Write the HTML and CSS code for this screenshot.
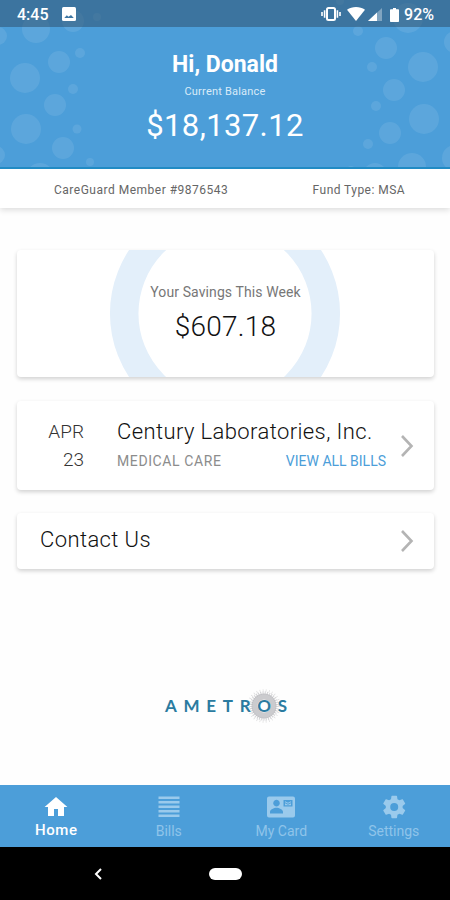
FILE: index.html
```html
<!DOCTYPE html>
<html lang="en">
<head>
    <meta charset="UTF-8">
    <meta name="viewport" content="width=device-width, initial-scale=1.0">
    <title>CareGuard</title>
    <link rel="stylesheet" href="styles.css">
</head>
<body>
    <header class="hero">
        <!-- Bubble pattern -->
        <svg class="bubbles" viewBox="0 0 450 169">
            <circle cx="36" cy="29" r="14"/>
            <circle cx="-2" cy="36" r="9"/>
            <circle cx="73" cy="21" r="11"/>
            <circle cx="97" cy="17" r="4"/>
            <circle cx="80" cy="53" r="5"/>
            <circle cx="59" cy="62" r="11"/>
            <circle cx="25" cy="78" r="15"/>
            <circle cx="73" cy="89" r="5"/>
            <circle cx="55" cy="105" r="11"/>
            <circle cx="26" cy="129" r="15"/>
            <circle cx="77" cy="129" r="4.5"/>
            <circle cx="63" cy="148" r="11"/>
            <circle cx="-4" cy="155" r="9"/>
            <circle cx="90" cy="162" r="4"/>
            <circle cx="40" cy="177" r="14"/>
            <circle cx="82" cy="174" r="7"/>
            <circle cx="340" cy="1" r="4"/>
            <circle cx="358" cy="31" r="5"/>
            <circle cx="408" cy="18" r="15"/>
            <circle cx="386" cy="48" r="11"/>
            <circle cx="455" cy="42" r="11"/>
            <circle cx="372" cy="67" r="5"/>
            <circle cx="423" cy="67" r="15"/>
            <circle cx="394" cy="90" r="11"/>
            <circle cx="376" cy="106" r="5"/>
            <circle cx="424" cy="119" r="15"/>
            <circle cx="390" cy="133" r="11"/>
            <circle cx="368" cy="144" r="5"/>
            <circle cx="412" cy="167" r="14"/>
            <circle cx="455" cy="158" r="13"/>
            <circle cx="375" cy="175" r="12"/>
            <circle cx="351" cy="171" r="5"/>
        </svg>

        <div class="status-bar">
            <span class="time">4:45</span>
            <svg class="picture-icon" width="14" height="14" viewBox="0 0 14 14">
                <rect width="14" height="14" rx="1.5" fill="#fff"/>
                <path d="M2.3 11 4.8 8.300 6.5 9.8 9 8 11.8 11z" fill="#3d76a3"/>
            </svg>
            <div class="status-right">
                <svg class="vibrate-icon" width="20" height="14" viewBox="0 0 20 14">
                    <rect x="6" y="1" width="8" height="12" rx="1.5" fill="none" stroke="#fff" stroke-width="2"/>
                    <path d="M3.6 3.2v7.6M16.4 3.2v7.6M1 5v4M19 5v4" stroke="#fff" stroke-width="1.6"/>
                </svg>
                <svg class="wifi-icon" width="18" height="14" viewBox="0 0 18 14">
                    <path d="M0 2.8C5 -.9 13 -.9 18 2.8L9 14z" fill="#fff"/>
                </svg>
                <svg class="signal-icon" width="14" height="13" viewBox="0 0 14 13">
                    <path d="M14 0v13H0z" fill="#fff" opacity=".35"/>
                    <path d="M9 4.6V13H0z" fill="#fff"/>
                </svg>
                <svg class="battery-icon" width="9" height="14" viewBox="0 0 9 14">
                    <path d="M3 0h3v1.2h2.2q.8 0 .8.8v11.2q0 .8-.8.8H.8q-.8 0-.8-.8V2q0-.8.8-.8H3z" fill="#fff"/>
                </svg>
                <span class="percent">92%</span>
            </div>
        </div>

        <h1>Hi, Donald</h1>
        <p class="balance-label">Current Balance</p>
        <p class="balance">$18,137.12</p>
    </header>

    <div class="member-bar">
        <span class="member">CareGuard Member #9876543</span>
        <span class="fund">Fund Type: MSA</span>
    </div>

    <main>
        <section class="card savings">
            <svg class="ring" width="232" height="127" viewBox="0 0 232 127">
                <circle cx="116" cy="63.5" r="100.8" fill="none" stroke="#e3effa" stroke-width="28.5"/>
            </svg>
            <p class="savings-label">Your Savings This Week</p>
            <p class="savings-amount">$607.18</p>
        </section>

        <section class="card bill">
            <div class="date">
                <span>APR</span>
                <span>23</span>
            </div>
            <div class="bill-info">
                <h2>Century Laboratories, Inc.</h2>
                <div class="bill-row">
                    <span class="category">MEDICAL CARE</span>
                    <a class="view-all">VIEW ALL BILLS</a>
                </div>
            </div>
            <svg class="chevron" width="14" height="24" viewBox="0 0 14 24">
                <path d="M2 2 11.5 12 2 22"/>
            </svg>
        </section>

        <section class="card contact">
            <h2>Contact Us</h2>
            <svg class="chevron" width="14" height="24" viewBox="0 0 14 24">
                <path d="M2 2 11.5 12 2 22"/>
            </svg>
        </section>

        <div class="logo">
            <span>AMETR</span><span class="logo-o">O<svg class="burst" width="36" height="36" viewBox="0 0 36 36">
                <circle cx="18" cy="18" r="9.5" fill="none" stroke="#a9a9ad" stroke-width="6" opacity=".6"/>
                <circle cx="18" cy="18" r="13" fill="none" stroke="#a9a9ad" stroke-width="3" stroke-dasharray="1 1.2" opacity=".5"/>
                <circle cx="18" cy="18" r="15.5" fill="none" stroke="#a9a9ad" stroke-width="2.5" stroke-dasharray=".7 2.4" opacity=".4"/>
            </svg></span><span>S</span>
        </div>
    </main>

    <nav class="tabs">
        <a class="tab active">
            <svg width="24" height="24" viewBox="0 0 24 24"><path d="M10 21v-7h4v7h6v-9h3.4L12 2 .6 12H4v9z"/></svg>
            <span>Home</span>
        </a>
        <a class="tab">
            <svg width="24" height="24" viewBox="0 0 24 24"><path d="M1.5 1.5h21v2.6h-21zM1.5 6h21v2.6h-21zM1.5 10.5h21v2.6h-21zM1.5 15h21v2.6h-21zM1.5 19.5h21v2.6h-21z"/></svg>
            <span>Bills</span>
        </a>
        <a class="tab">
            <svg width="28" height="24" viewBox="0 0 28 24">
                <path fill-rule="evenodd" d="M2 1.5h24q2 0 2 2v17q0 2-2 2H2q-2 0-2-2v-17q0-2 2-2zM9.500 4.800a3.300 3.300 0 1 0 .01 0zM3 18.500h13v-1.500c0-2.600-4-4.200-6.500-4.200S3 14.400 3 17zM16.500 5v6.500h9V5z"/>
                <path d="M18 6.200v1l3 1.600 3-1.600v-1l-3 1.600zM18 8.300v2h6v-2l-3 1.500z"/>
            </svg>
            <span>My Card</span>
        </a>
        <a class="tab">
            <svg width="24" height="24" viewBox="0 0 24 24"><path d="M20.600 13.100c.05-.4.080-.7.080-1.100s-.03-.7-.08-1.100l2.400-1.850c.2-.17.26-.47.12-.72l-2.250-3.900c-.14-.25-.44-.33-.68-.25l-2.800 1.130c-.6-.44-1.230-.82-1.930-1.100L15.040 1.200c-.03-.27-.27-.47-.55-.47H9.980c-.28 0-.52.2-.55.47L9 4.200c-.7.280-1.330.67-1.930 1.100L4.280 4.180c-.25-.1-.54 0-.68.25L1.350 8.330c-.14.25-.08.55.12.72L3.850 10.900c-.05.4-.08.73-.08 1.100s.03.7.08 1.100L1.470 14.950c-.2.170-.27.470-.12.720l2.250 3.900c.14.250.44.330.68.250l2.800-1.130c.6.440 1.230.82 1.930 1.100l.42 2.980c.03.270.27.470.55.470h4.500c.28 0 .52-.2.550-.47l.42-2.980c.7-.28 1.330-.66 1.930-1.100l2.800 1.130c.25.1.54 0 .68-.25l2.250-3.900c.14-.25.08-.55-.12-.72zM12.200 16a4 4 0 1 1 0-8 4 4 0 0 1 0 8z"/></svg>
            <span>Settings</span>
        </a>
    </nav>

    <footer class="system-nav">
        <svg class="back" width="8" height="12" viewBox="0 0 8 12"><path d="M7 1 2 6l5 5"/></svg>
        <span class="pill"></span>
    </footer>
</body>
</html>
```
FILE: styles.css
```css
* {
    box-sizing: border-box;
}
body {
    margin: 0;
    width: 450px;
    height: 900px;
    display: flex;
    flex-direction: column;
    background-color: #fefefe;
    font-family: Roboto, 'Liberation Sans', sans-serif;
    color: #303030;
    overflow: hidden;
}
h1, h2, p {
    margin: 0;
    font-weight: 400;
    white-space: nowrap;
}
span, a {
    white-space: nowrap;
}
svg {
    display: block;
    flex-shrink: 0;
}

/* Header */
.hero {
    position: relative;
    height: 169px;
    background-color: #4c9ed9;
    border-bottom: 2px solid #218bc4;
    color: #fff;
    text-align: center;
    overflow: hidden;
}
.bubbles {
    position: absolute;
    top: 0;
    left: 0;
    width: 450px;
    height: 169px;
    fill: rgba(255, 255, 255, 0.09);
}
.status-bar {
    position: relative;
    height: 27px;
    padding: 1px 16px 0 17px;
    display: flex;
    align-items: center;
    background-color: rgba(48, 82, 112, 0.55);
    font-size: 16px;
    font-weight: 500;
}
.picture-icon {
    margin-left: 13px;
}
.status-right {
    margin-left: auto;
    display: flex;
    align-items: center;
}
.wifi-icon {
    margin-left: 6px;
}
.signal-icon {
    margin: 1px 0 0 3px;
}
.battery-icon {
    margin: 1px 5px 0 8px;
}
.hero h1 {
    position: relative;
    margin-top: 24px;
    font-size: 23px;
    font-weight: 700;
    line-height: 28px;
}
.balance-label {
    position: relative;
    margin-top: 6px;
    font-size: 11px;
    line-height: 14px;
    letter-spacing: 0.2px;
    color: #d9ebf8;
}
.balance {
    position: relative;
    margin-top: 9px;
    font-size: 31px;
    line-height: 36px;
    letter-spacing: 0.4px;
}
.member-bar {
    height: 39px;
    padding: 2px 45px 0 54px;
    display: flex;
    align-items: center;
    justify-content: space-between;
    background-color: #fff;
    box-shadow: 0 2px 6px rgba(0, 0, 0, 0.14);
    font-size: 12px;
    color: #666;
}
.member {
    letter-spacing: 0.5px;
}
.fund {
    letter-spacing: 0.45px;
}

/* Cards */
main {
    height: 577px;
    padding: 42px 16px 0 17px;
    display: flex;
    flex-direction: column;
}
.card {
    background-color: #fff;
    border-radius: 4px;
    box-shadow: 0 2px 4px rgba(0, 0, 0, 0.18);
}
.savings {
    position: relative;
    height: 127px;
    padding-top: 32px;
    text-align: center;
    overflow: hidden;
}
.ring {
    position: absolute;
    top: 0;
    left: 92px;
}
.savings-label {
    position: relative;
    font-size: 14px;
    line-height: 20px;
    letter-spacing: 0.1px;
    color: #777;
}
.savings-amount {
    position: relative;
    margin-top: 8px;
    font-size: 28px;
    font-weight: 300;
    line-height: 34px;
    letter-spacing: 0.2px;
    color: #111;
}
.bill {
    height: 89px;
    margin-top: 24px;
    padding-right: 20px;
    display: flex;
    align-items: center;
}
.date {
    width: 67px;
    display: flex;
    flex-direction: column;
    text-align: right;
    font-size: 19px;
    font-weight: 300;
    line-height: 28px;
    color: #333;
}
.bill-info {
    width: 269px;
    margin-left: 33px;
}
h2 {
    font-size: 22px;
    font-weight: 300;
    line-height: 30px;
    letter-spacing: 0.4px;
    color: #111;
}
.bill-row {
    display: flex;
    justify-content: space-between;
    font-size: 14px;
    line-height: 28px;
}
.category {
    color: #8c8c8c;
    letter-spacing: 0.6px;
}
.view-all {
    color: #4c9ed9;
}
.chevron {
    margin-left: auto;
    fill: none;
    stroke: #b4b4b4;
    stroke-width: 2.6;
}
.contact {
    height: 56px;
    margin-top: 23px;
    padding: 0 20px 2px 23px;
    display: flex;
    align-items: center;
}
.contact .chevron {
    margin-top: 2px;
}

/* Logo */
.logo {
    margin: 125px 0 0 148px;
    display: flex;
    font-family: Lato, sans-serif;
    font-size: 17px;
    font-weight: 700;
    line-height: 24px;
    letter-spacing: 6.7px;
    color: #2b7ba0;
}
.logo-o {
    position: relative;
}
.burst {
    position: absolute;
    top: -6px;
    left: -11px;
    z-index: -1;
}

/* Bottom tabs */
.tabs {
    height: 62px;
    padding-top: 10px;
    display: flex;
    background-color: #4c9ed9;
}
.tab {
    flex: 1;
    display: flex;
    flex-direction: column;
    align-items: center;
    gap: 3px;
    font-size: 14px;
    line-height: 18px;
    color: #8fc4ea;
    fill: #9acaec;
}
.tab.active {
    gap: 2px;
    font-size: 15px;
    letter-spacing: 0.6px;
    font-weight: 500;
    color: #fff;
    fill: #fff;
}
.system-nav {
    height: 53px;
    padding-left: 94px;
    display: flex;
    align-items: center;
    background-color: #000;
}
.back {
    fill: none;
    stroke: #fff;
    stroke-width: 2;
}
.pill {
    width: 33px;
    height: 12px;
    margin-left: 107px;
    border-radius: 6px;
    background-color: #fff;
}
```
